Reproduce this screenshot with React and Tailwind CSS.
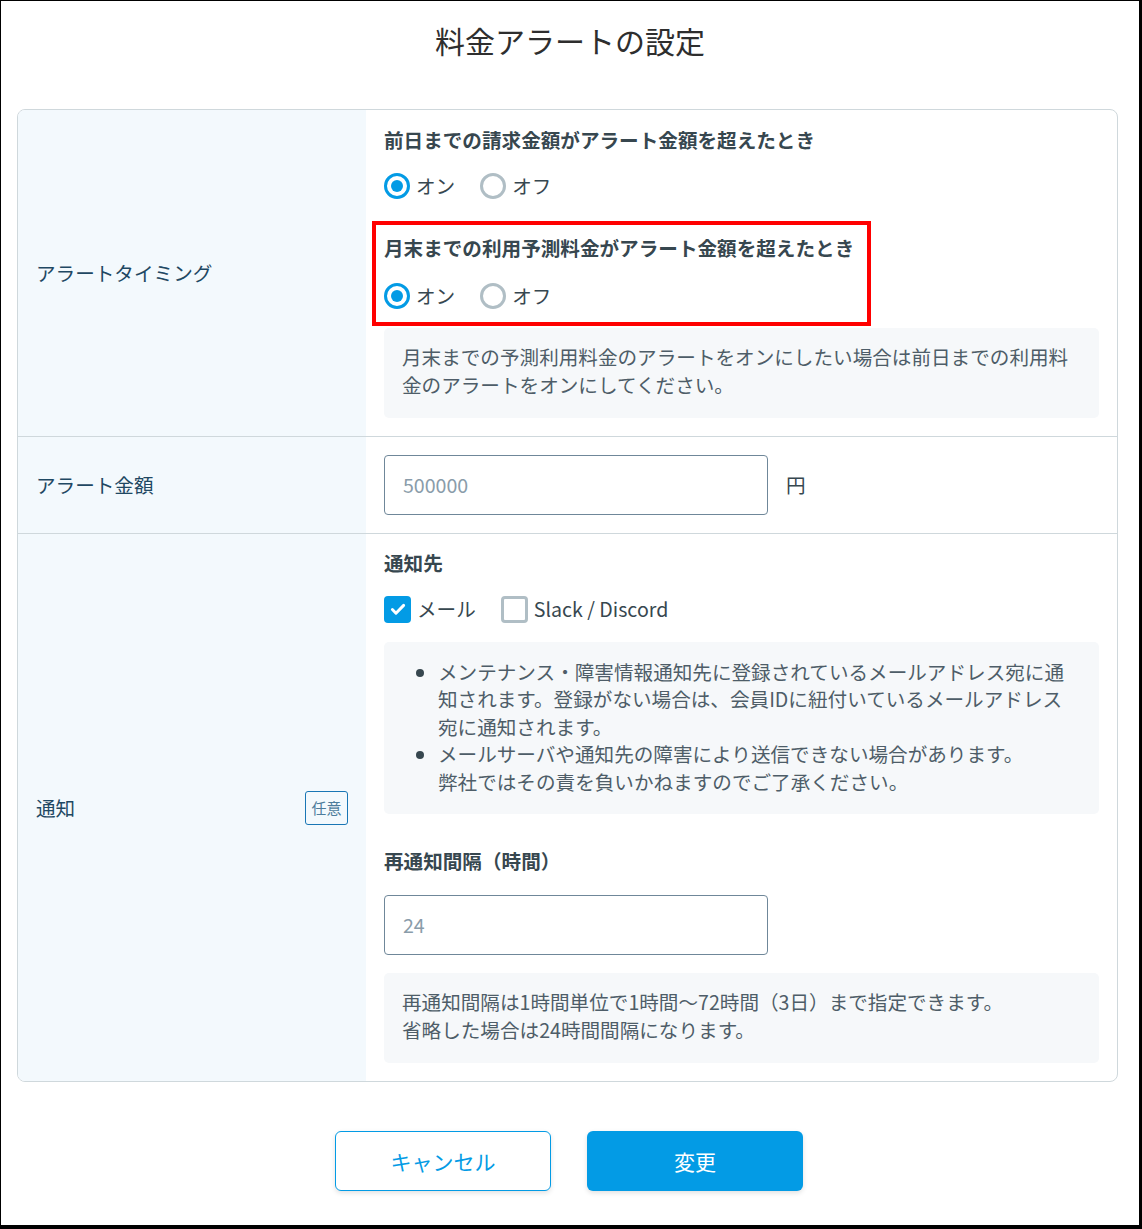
import React from "react";

function Radio({ checked, label }) {
  return (
    <label className="flex items-center gap-[6px] h-[28px]">
      <span
        className={
          checked
            ? "w-[26px] h-[26px] rounded-full border-[3px] border-[#039be5] flex items-center justify-center bg-white"
            : "w-[26px] h-[26px] rounded-full border-[3px] border-[#b0bec5] bg-white"
        }
      >
        {checked && <span className="w-[12px] h-[12px] rounded-full bg-[#039be5]" />}
      </span>
      <span className="text-[#37474f]">{label}</span>
    </label>
  );
}

function Check({ checked, label }) {
  return (
    <label className="flex items-center gap-[6px] h-[28px]">
      {checked ? (
        <span className="w-[27px] h-[27px] rounded-[4px] bg-[#039be5] flex items-center justify-center">
          <svg width="18" height="18" viewBox="0 0 16 16" fill="none">
            <path d="M3 8.5l3.2 3.2L13 4.8" stroke="#fff" strokeWidth="2.6" strokeLinecap="round" strokeLinejoin="round" />
          </svg>
        </span>
      ) : (
        <span className="w-[27px] h-[27px] rounded-[4px] border-[3px] border-[#b0bec5] bg-white" />
      )}
      <span className="text-[#37474f]">{label}</span>
    </label>
  );
}

export default function App() {
  return (
    <div className="w-[1142px] h-[1229px] bg-white border-t border-l border-r-[3px] border-b-[4px] border-black font-['Noto_Sans_CJK_JP',sans-serif] text-[19.6px] leading-[28px] text-[#37474f]">
      <h1 className="pt-[17px] h-[108px] text-center text-[30px] leading-[45px] text-[#2e2e2e] font-normal">
        料金アラートの設定
      </h1>
      <div className="ml-[16px] w-[1101px] border border-[#cfd8dc] rounded-[8px] overflow-hidden">
        {/* Row 1 */}
        <div className="grid grid-cols-[348px_1fr]">
          <div className="bg-[#f3f9fd] flex items-center pl-[18px] text-[#1f4863]">アラートタイミング</div>
          <div className="pt-[16px] pb-[18px] px-[18px]">
            <div className="font-bold">前日までの請求金額がアラート金額を超えたとき</div>
            <div className="flex gap-[25px] mt-[18px]">
              <Radio checked label="オン" />
              <Radio label="オフ" />
            </div>
            <div className="mt-[21px] -ml-[12px] w-fit border-[4px] border-[#ff0000] pl-[8px] pr-[13px] pt-[9px] pb-[12px]">
              <div className="font-bold">月末までの利用予測料金がアラート金額を超えたとき</div>
              <div className="flex gap-[25px] mt-[20px]">
                <Radio checked label="オン" />
                <Radio label="オフ" />
              </div>
            </div>
            <div className="mt-[2px] bg-[#f6f8fa] rounded-[5px] px-[18px] pt-[15px] pb-[19px] text-[#4e5d68]">
              月末までの予測利用料金のアラートをオンにしたい場合は前日までの利用料金のアラートをオンにしてください。
            </div>
          </div>
        </div>
        {/* Row 2 */}
        <div className="grid grid-cols-[348px_1fr] border-t border-[#cfd8dc]">
          <div className="bg-[#f3f9fd] flex items-center pl-[18px] text-[#1f4863]">アラート金額</div>
          <div className="py-[18px] px-[18px] flex items-center gap-[18px]">
            <div className="w-[384px] h-[60px] border border-[#6f8799] rounded-[4px] flex items-center px-[18px] text-[#8a9caa]">
              500000
            </div>
            <span className="text-[#37474f]">円</span>
          </div>
        </div>
        {/* Row 3 */}
        <div className="grid grid-cols-[348px_1fr] border-t border-[#cfd8dc]">
          <div className="bg-[#f3f9fd] flex items-center justify-between pl-[18px] pr-[18px] text-[#1f4863]">
            <span>通知</span>
            <span className="w-[43px] h-[34px] border border-[#1976b5] rounded-[3px] flex items-center justify-center text-[15px] text-[#4d7c9c]">
              任意
            </span>
          </div>
          <div className="pt-[15px] pb-[18px] px-[18px]">
            <div className="font-bold">通知先</div>
            <div className="flex gap-[25px] mt-[18px]">
              <Check checked label="メール" />
              <Check label="Slack / Discord" />
            </div>
            <div className="mt-[19px] bg-[#f6f8fa] rounded-[5px] pl-[18px] pr-[18px] pt-[16px] pb-[19px] text-[#4e5d68]">
              <ul className="list-disc pl-[36px] leading-[1.4] marker:text-[#37474f]">
                <li>メンテナンス・障害情報通知先に登録されているメールアドレス宛に通知されます。登録がない場合は、会員IDに紐付いているメールアドレス宛に通知されます。</li>
                <li>
                  メールサーバや通知先の障害により送信できない場合があります。
                  <br />
                  弊社ではその責を負いかねますのでご了承ください。
                </li>
              </ul>
            </div>
            <div className="mt-[33px] font-bold">再通知間隔（時間）</div>
            <div className="mt-[20px] w-[384px] h-[60px] border border-[#6f8799] rounded-[4px] flex items-center px-[18px] text-[#8a9caa]">
              24
            </div>
            <div className="mt-[18px] bg-[#f6f8fa] rounded-[5px] px-[18px] pt-[15px] pb-[19px] text-[#4e5d68]">
              再通知間隔は1時間単位で1時間〜72時間（3日）まで指定できます。
              <br />
              省略した場合は24時間間隔になります。
            </div>
          </div>
        </div>
      </div>
      <div className="flex justify-center gap-[36px] mt-[49px] pr-[2px]">
        <button className="w-[216px] h-[60px] rounded-[6px] border border-[#039be5] bg-white text-[#039be5] text-[21px] shadow-[0_2px_5px_rgba(0,0,0,0.12)]">
          キャンセル
        </button>
        <button className="w-[216px] h-[60px] rounded-[6px] bg-[#039be5] text-white text-[21px] shadow-[0_2px_5px_rgba(0,0,0,0.12)]">
          変更
        </button>
      </div>
    </div>
  );
}
